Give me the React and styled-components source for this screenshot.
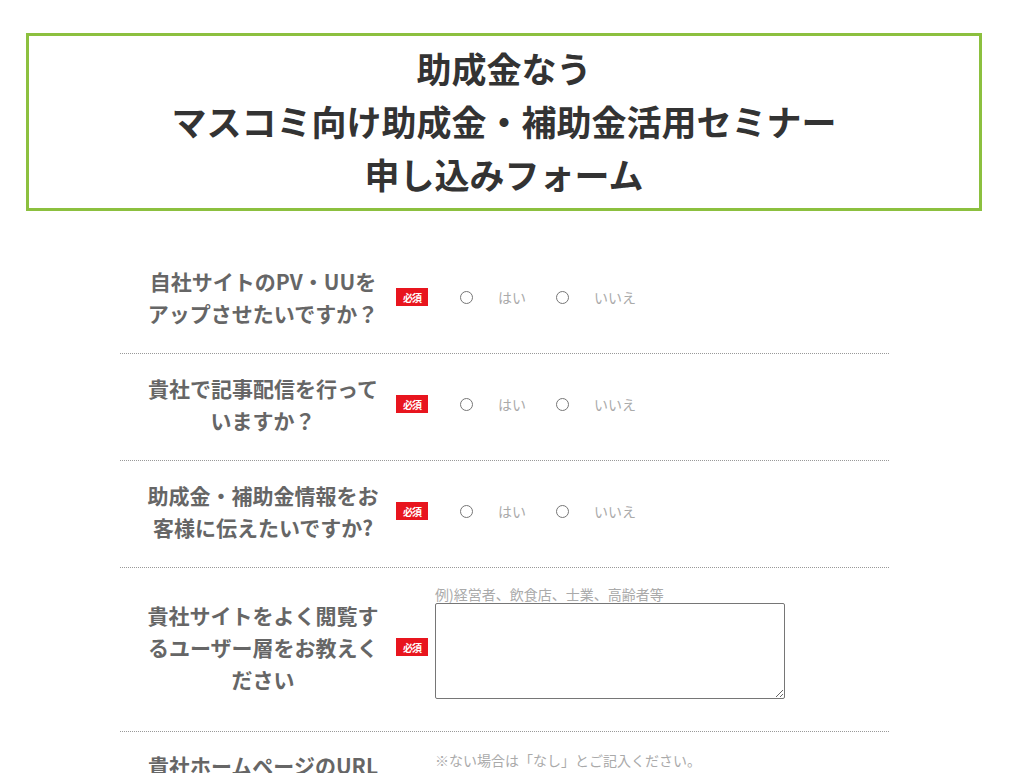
import React from 'react';
import styled, { createGlobalStyle } from 'styled-components';

const GlobalStyle = createGlobalStyle`
    body {
        margin: 0;
        background: #fff;
        font-family: "Noto Sans CJK JP", "Noto Sans", sans-serif;
    }
`;

const StyledPage = styled.div`
        padding-top: 33px;
`;
const StyledTitleBox = styled.div`
        box-sizing: border-box;
        width: 956px;
        margin-left: 26px;
        border: 3px solid #8cc03f;
        padding: 5px 0 8px;
        text-align: center;
        color: #333;
        font-size: 35px;
        font-weight: bold;
        line-height: 53px;
`;
const StyledForm = styled.div`
        width: 769px;
        margin: 36px 0 0 120px;
`;
const StyledRow = styled.div`
        display: flex;
        align-items: ${props => props.$align || 'center'};
        padding: ${props => props.$pad || '18px 0 24px'};
        border-bottom: ${props => props.$last ? 'none' : '1px dotted #999'};
`;
const StyledLabelCell = styled.div`
        display: flex;
        align-items: center;
        width: 308px;
        flex-shrink: 0;
`;
const StyledLabel = styled.div`
        width: 236px;
        margin-left: 25px;
        text-align: center;
        color: #666;
        font-size: 21px;
        font-weight: bold;
        line-height: 32px;
`;
const StyledBadge = styled.span`
        display: inline-flex;
        align-items: center;
        justify-content: center;
        width: 32px;
        height: 18px;
        margin-left: 15px;
        background: #e8151e;
        color: #fff;
        font-size: 10px;
        font-weight: bold;
        letter-spacing: -1px;
`;
const StyledControls = styled.div`
        display: flex;
        align-items: center;
        padding-left: ${props => props.$indent || '0'};
`;
const StyledRadio = styled.input`
        appearance: none;
        box-sizing: border-box;
        width: 13px;
        height: 13px;
        margin: 0 25px 0 0;
        border: 1px solid #767676;
        border-radius: 50%;
`;
const StyledOption = styled.label`
        display: flex;
        align-items: center;
        margin-right: 30px;
        color: #aaa;
        font-size: 14px;
`;
const StyledField = styled.div`
        display: flex;
        flex-direction: column;
        padding: ${props => props.$top || '0'} 0 0 7px;
`;
const StyledHint = styled.div`
        color: #aaa;
        font-size: 14px;
        line-height: 18px;
`;
const StyledTextArea = styled.textarea`
        box-sizing: border-box;
        width: 350px;
        height: 96px;
        margin: 0 0 10px;
        border: 1px solid #767676;
        border-radius: 2px;
        font-family: inherit;
`;

const RadioGroup = ({ name }) =>
    <StyledControls $indent={'32px'}>
        <StyledOption>
            <StyledRadio type={'radio'} name={name} />
            {'はい'}
        </StyledOption>
        <StyledOption>
            <StyledRadio type={'radio'} name={name} />
            {'いいえ'}
        </StyledOption>
    </StyledControls>;

const App = () =>
    <>
        <GlobalStyle />
        <StyledPage>
            <StyledTitleBox>
                {'助成金なう'}<br />
                {'マスコミ向け助成金・補助金活用セミナー'}<br />
                {'申し込みフォーム'}
            </StyledTitleBox>
            <StyledForm>
                <StyledRow>
                    <StyledLabelCell>
                        <StyledLabel>{'自社サイトのPV・UUをアップさせたいですか？'}</StyledLabel>
                        <StyledBadge>{'必須'}</StyledBadge>
                    </StyledLabelCell>
                    <RadioGroup name={'q1'} />
                </StyledRow>
                <StyledRow>
                    <StyledLabelCell>
                        <StyledLabel>{'貴社で記事配信を行っていますか？'}</StyledLabel>
                        <StyledBadge>{'必須'}</StyledBadge>
                    </StyledLabelCell>
                    <RadioGroup name={'q2'} />
                </StyledRow>
                <StyledRow>
                    <StyledLabelCell>
                        <StyledLabel>{'助成金・補助金情報をお客様に伝えたいですか?'}</StyledLabel>
                        <StyledBadge>{'必須'}</StyledBadge>
                    </StyledLabelCell>
                    <RadioGroup name={'q3'} />
                </StyledRow>
                <StyledRow $pad={'17px 0 22px'}>
                    <StyledLabelCell>
                        <StyledLabel>{'貴社サイトをよく閲覧するユーザー層をお教えください'}</StyledLabel>
                        <StyledBadge>{'必須'}</StyledBadge>
                    </StyledLabelCell>
                    <StyledField>
                        <StyledHint>{'例)経営者、飲食店、士業、高齢者等'}</StyledHint>
                        <StyledTextArea />
                    </StyledField>
                </StyledRow>
                <StyledRow $pad={'17px 0'} $align={'flex-start'} $last>
                    <StyledLabelCell>
                        <StyledLabel>{'貴社ホームページのURL'}</StyledLabel>
                    </StyledLabelCell>
                    <StyledField $top={'2px'}>
                        <StyledHint>{'※ない場合は「なし」とご記入ください。'}</StyledHint>
                    </StyledField>
                </StyledRow>
            </StyledForm>
        </StyledPage>
    </>;

export default App;
